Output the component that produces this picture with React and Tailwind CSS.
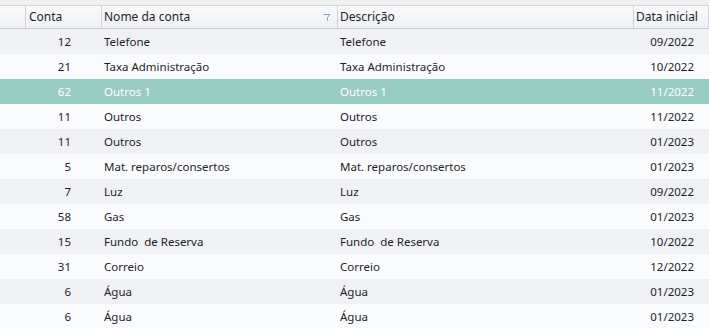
import React from 'react';

const rows = [
  { conta: 12, nome: 'Telefone', desc: 'Telefone', data: '09/2022' },
  { conta: 21, nome: 'Taxa Administração', desc: 'Taxa Administração', data: '10/2022' },
  { conta: 62, nome: 'Outros 1', desc: 'Outros 1', data: '11/2022', selected: true },
  { conta: 11, nome: 'Outros', desc: 'Outros', data: '11/2022' },
  { conta: 11, nome: 'Outros', desc: 'Outros', data: '01/2023' },
  { conta: 5, nome: 'Mat. reparos/consertos', desc: 'Mat. reparos/consertos', data: '01/2023' },
  { conta: 7, nome: 'Luz', desc: 'Luz', data: '09/2022' },
  { conta: 58, nome: 'Gas', desc: 'Gas', data: '01/2023' },
  { conta: 15, nome: 'Fundo  de Reserva', desc: 'Fundo  de Reserva', data: '10/2022' },
  { conta: 31, nome: 'Correio', desc: 'Correio', data: '12/2022' },
  { conta: 6, nome: 'Água', desc: 'Água', data: '01/2023' },
  { conta: 6, nome: 'Água', desc: 'Água', data: '01/2023' },
];

const cols = 'grid grid-cols-[26px_76px_236px_296px_75px]';

const FilterIcon = () => (
  <svg width="8" height="8" viewBox="0 0 8 8" className="shrink-0">
    <path d="M0.5 1.5 H7 L4.5 4.5 V7.5" fill="none" stroke="#7f9db9" strokeWidth="1" />
  </svg>
);

export default function App() {
  return (
    <div
      className="w-[709px] h-[329px] overflow-hidden bg-[#fafbfd] text-[11.5px] text-[#1e1e28]"
      style={{ fontFamily: '"Noto Sans", "Open Sans", sans-serif' }}
    >
      {/* top strip */}
      <div className="h-[6px] bg-[#f0f0f0] border-b border-[#d6d7da]" />

      {/* header */}
      <div className={`${cols} h-[23px] bg-gradient-to-b from-[#f9fafb] to-[#eef0f3] border-b border-[#c5c9d0]`}>
        <div className="border-r border-[#d0d3d9]" />
        <div className="border-r border-[#d0d3d9] pl-[3px] flex items-center text-[12px]">Conta</div>
        <div className="border-r border-[#d0d3d9] pl-[2px] pr-[6px] flex items-center justify-between text-[12px]">
          <span>Nome da conta</span>
          <FilterIcon />
        </div>
        <div className="border-r border-[#d0d3d9] pl-[2px] flex items-center text-[12px]">Descrição</div>
        <div className="border-r border-[#d0d3d9] pl-[2px] flex items-center text-[12px]">Data inicial</div>
      </div>

      {/* body */}
      {rows.map((r, i) => {
        const bg = r.selected
          ? 'bg-[#98cdc3] text-white'
          : i % 2 === 0
          ? 'bg-[#f0f1f5]'
          : 'bg-[#fafbfd]';
        return (
          <div key={i} className={`${cols} h-[25px] items-center ${bg}`}>
            <div />
            <div className="text-right pr-[31px]">{r.conta}</div>
            <div className="pl-[2px] whitespace-pre">{r.nome}</div>
            <div className="pl-[2px] whitespace-pre">{r.desc}</div>
            <div className="text-right pr-[15px]">{r.data}</div>
          </div>
        );
      })}
    </div>
  );
}
